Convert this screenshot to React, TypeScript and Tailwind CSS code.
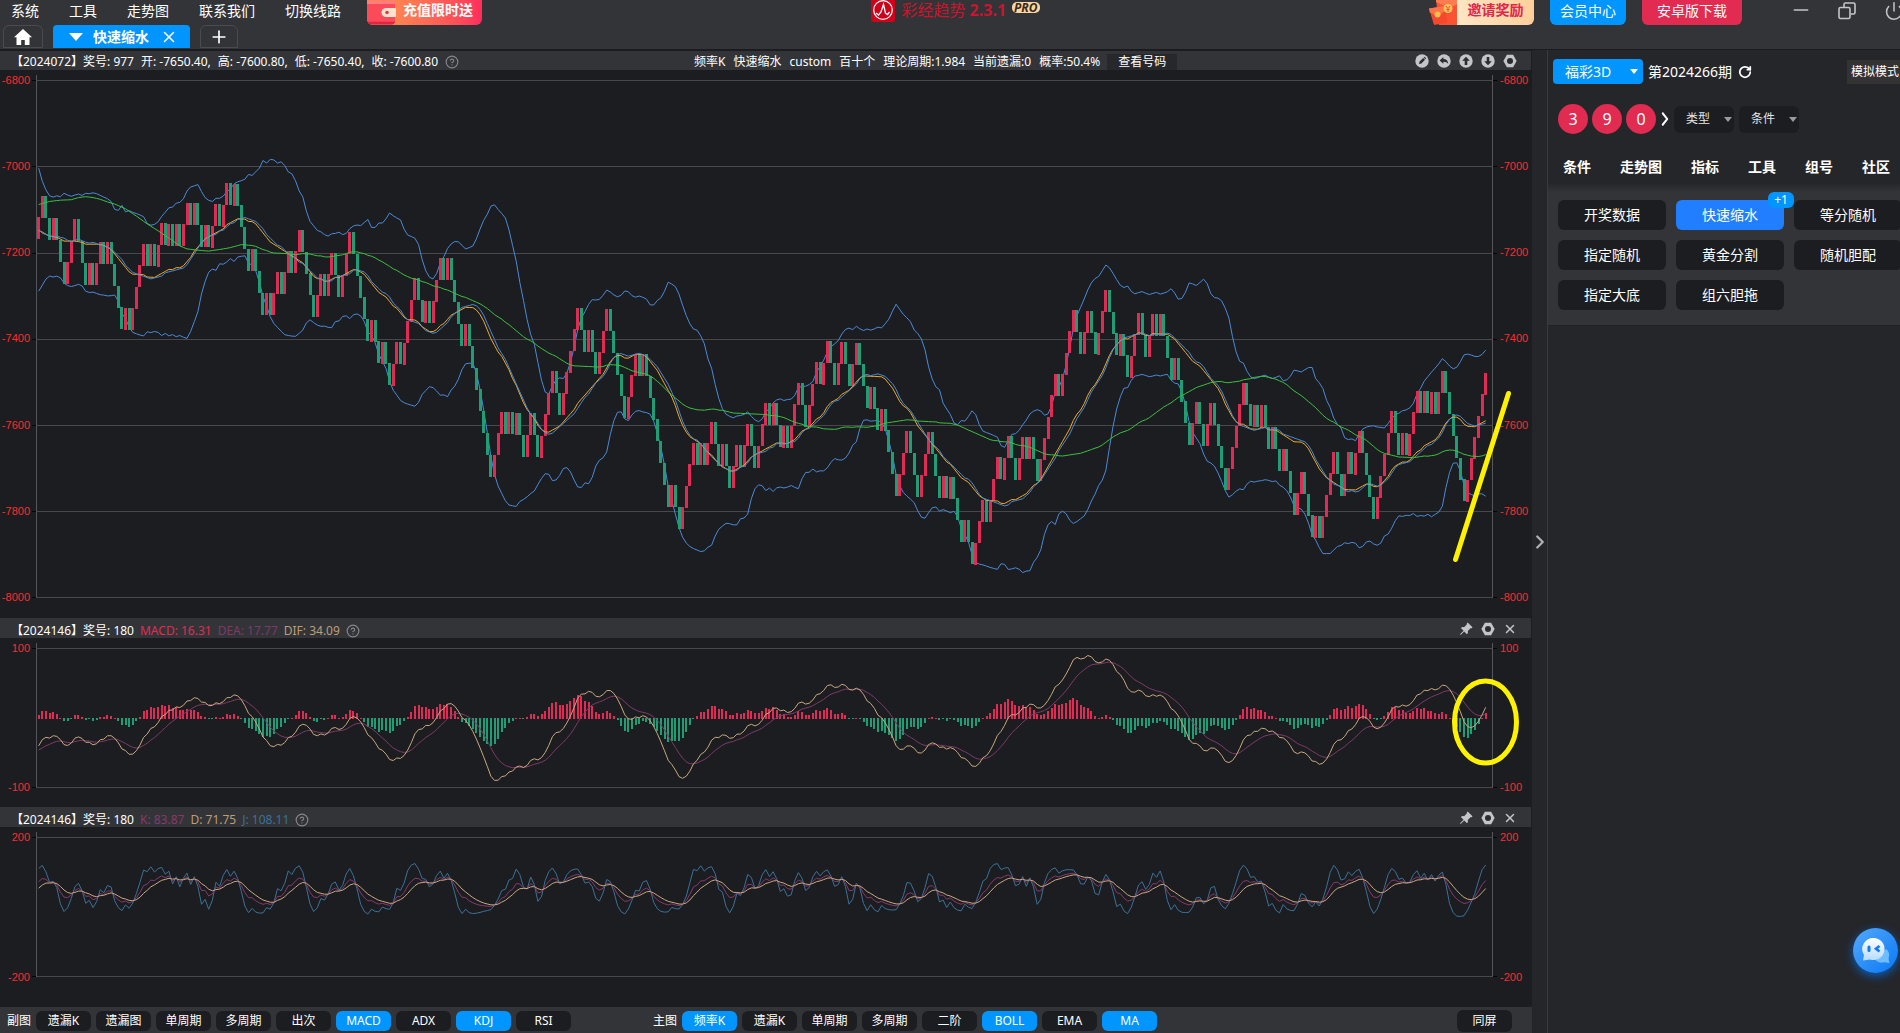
import { ReactNode } from 'react';
import { ChevronRight, CircleHelp, Minus, Plus, Power, RotateCw, X } from 'lucide-react';
import { BsPinAngleFill } from 'react-icons/bs';

/* ---------- market data ---------- */

// U = hit (+49.6), D = miss (-50.4)
const DRAWS = [
  'UUDDUDDDUU', 'UDDDUDUUDU', 'DDDDUDUUUU', 'DUDUUDUDUD', 'UUDUDDUDUU',
  'DUUDUDDDDU', 'DDDUDUUDUU', 'DUUDDDDUUD', 'UUDDUUUDDD', 'DDUDDUDDUU',
  'DUUUUDDUDU', 'UUDUDDDDUD', 'DDDDDDUUUD', 'UDUDDUUDDU', 'UUUDDUUUUU',
  'DDUDDUUUDD', 'DDDUUUDUDD', 'DDDDDUDDUU', 'UUDUDUUDDU', 'DDUUDUUDDU',
  'UUDUDDUDUU', 'UDDUUUDUUD', 'DUUDDUUDDD', 'UDDUDDDDUU', 'UDDDUUUDDD',
  'UDUDDDUDDU', 'UUDUUUDUUD', 'DUUDUDDUUU', 'UUDUUUUDDU', 'UDDUUUDDDU',
  'DDUUUDDUUD', 'UDDDUDDDDU', 'UDDUUDDDDU', 'UUUUDDUDUD', 'DUDDUDDDUU',
  'DDDUDUUUUD', 'DUUDUUDDDD', 'UUUUUDDUDU', 'UUDUDUDUUD', 'DDDDDUUUUU',
  'U',
].join('');

type Candle = { open: number; close: number; up: boolean };

const candles: Candle[] = [];
let last = -7167.5;
for (const d of DRAWS) {
  const up = d === 'U';
  const close = last + (up ? 49.6 : -50.4);
  candles.push({ open: last, close, up });
  last = close;
}
const closes = candles.map((c) => c.close);

// Values of the indicators while their window still reaches before the first candle
const WARM_UPPER = [7004, 7034, 7054, 7068, 7071, 7068, 7070, 7062, 7066, 7069, 7066, 7064, 7067, 7062, 7063, 7061, 7063, 7067, 7071];
const WARM_LOWER = [7289, 7275, 7261, 7254, 7256, 7254, 7258, 7270, 7276, 7278, 7276, 7273, 7277, 7289, 7292, 7291, 7294, 7297, 7298];
const WARM_MA20 = [7148, 7152, 7157, 7161, 7162, 7164, 7168, 7173, 7173, 7173, 7173, 7174, 7176, 7180, 7180, 7180, 7180, 7181, 7183];
const WARM_MA60: [number, number][] = [
  [0, 7088], [3, 7081], [6, 7078], [9, 7077], [11, 7072], [13, 7070], [15, 7072], [17, 7076], [19, 7082],
  [21, 7087], [24, 7098], [27, 7115], [30, 7133], [33, 7149], [36, 7166], [39, 7184], [41, 7191], [44, 7194],
  [47, 7196], [51, 7191], [53, 7188], [56, 7181], [59, 7183],
];

const mean = (v: number[]) => v.reduce((a, b) => a + b, 0) / v.length;

const knot = (pts: [number, number][], i: number) => {
  const n = pts.findIndex((p) => p[0] >= i);
  if (n <= 0) return pts[0][1];
  const [x0, y0] = pts[n - 1];
  const [x1, y1] = pts[n];
  return y0 + ((y1 - y0) * (i - x0)) / (x1 - x0);
};

const ma20 = closes.map((_, i) => (i < 19 ? -WARM_MA20[i] : mean(closes.slice(i - 19, i + 1))));
const ma60 = closes.map((_, i) => (i < 60 ? -knot(WARM_MA60, i) : mean(closes.slice(i - 59, i + 1))));

// Middle band is the N-1 average, the deviation is taken over the full N
const boll = closes.map((_, i) => {
  if (i < 19) {
    const up = -WARM_UPPER[i];
    const low = -WARM_LOWER[i];
    return { up, low, mid: (up + low) / 2 };
  }
  const mid = mean(closes.slice(i - 19, i));
  const w = closes.slice(i - 19, i + 1);
  const sd = Math.sqrt(mean(w.map((c) => (c - ma20[i]) ** 2)));
  return { up: mid + 2 * sd, low: mid - 2 * sd, mid };
});

let fast = -7143;
let slow = -7103;
let signal = -46;
const macd = closes.map((c, i) => {
  if (i > 0) {
    fast += ((c - fast) * 2) / 13;
    slow += ((c - slow) * 2) / 27;
    signal += (fast - slow - signal) / 5;
  }
  return { dif: fast - slow, dea: signal, bar: fast - slow - signal };
});

let kVal = 73;
let dVal = 54;
const kdj = candles.map((c, i) => {
  if (i > 0) {
    const w = candles.slice(Math.max(0, i - 8), i + 1);
    const high = Math.max(...w.map((x) => Math.max(x.open, x.close)));
    const low = Math.min(i < 6 ? -7268 : 0, ...w.map((x) => Math.min(x.open, x.close)));
    kVal = (kVal * 2 + ((c.close - low) / (high - low)) * 100) / 3;
    dVal = (dVal * 2 + kVal) / 3;
  }
  return { k: kVal, d: dVal, j: 3 * kVal - 2 * dVal };
});

/* ---------- charts ---------- */

const PLOT_W = 1466;
const xAt = (i: number) => 6.7 + i * 3.6176;

const toPoints = (values: number[], y: (v: number) => number) =>
  values.map((v, i) => `${xAt(i).toFixed(1)},${y(v).toFixed(1)}`).join(' ');

const Curve = ({ points, color }: { points: string; color: string }) => (
  <polyline points={points} fill="none" stroke={color} strokeWidth="1" vectorEffect="non-scaling-stroke" />
);

const Axes = ({ lines }: { lines: number[] }) => {
  const bottom = Math.max(...lines);
  return (
    <g shapeRendering="crispEdges" strokeWidth="1">
      {lines.map((y) => (
        <g key={y}>
          <path d={`M4.5 ${y}H1460.5`} stroke="#47484b" />
          <path d={`M0 ${y}H4M1461 ${y}H1465`} stroke="#050505" />
        </g>
      ))}
      <path d={`M4.5 5V${bottom}M1460.5 5V${bottom}`} stroke="#55565a" />
    </g>
  );
};

const priceY = (v: number) => 10.2 + (-6800 - v) * 0.4315;
const macdY = (v: number) => 80 - v * 0.696;
const kdjY = (v: number) => 80 - v * 0.3475;

const PricePlot = () => (
  <>
    <Axes lines={[10.5, 96.5, 183.5, 269.5, 355.5, 441.5, 527.5]} />
    <Curve points={toPoints(boll.map((b) => b.up), priceY)} color="#4a8ad8" />
    <Curve points={toPoints(boll.map((b) => b.low), priceY)} color="#4a8ad8" />
    <g shapeRendering="crispEdges">
      {candles.map((c, i) => (
        <rect
          key={i}
          x={Math.round(xAt(i) - 1.5)}
          y={Math.round(priceY(Math.max(c.open, c.close)))}
          width="3"
          height="22"
          fill={c.up ? '#e12b54' : '#1f9d75'}
        />
      ))}
    </g>
    <Curve points={toPoints(ma20, priceY)} color="#f5aa1c" />
    <Curve points={toPoints(boll.map((b) => b.mid), priceY)} color="#4a8ad8" />
    <Curve points={toPoints(ma60, priceY)} color="#3cc040" />
  </>
);

const MacdPlot = () => (
  <>
    <Axes lines={[10.5, 149.5]} />
    <g shapeRendering="crispEdges">
      {macd.map((m, i) => {
        const h = Math.max(1, Math.round(Math.abs(m.bar) * 0.696));
        return (
          <rect
            key={i}
            x={Math.round(xAt(i) - 1)}
            y={m.bar > 0 ? 81 - h : 80}
            width="2"
            height={h}
            fill={m.bar > 0 ? '#e12b54' : '#1f9d75'}
          />
        );
      })}
    </g>
    <Curve points={toPoints(macd.map((m) => m.dea), macdY)} color="#7d3a68" />
    <Curve points={toPoints(macd.map((m) => m.dif), macdY)} color="#c9a87f" />
  </>
);

const KdjPlot = () => (
  <>
    <Axes lines={[10.5, 149.5]} />
    <Curve points={toPoints(kdj.map((v) => v.j), kdjY)} color="#3b7199" />
    <Curve points={toPoints(kdj.map((v) => v.k), kdjY)} color="#853a6c" />
    <Curve points={toPoints(kdj.map((v) => v.d), kdjY)} color="#c9a87f" />
  </>
);

type ChartProps = {
  labels: string[];
  viewHeight: number;
  heightClass: string;
  labelPad: string;
  children: ReactNode;
};

const Chart = ({ labels, viewHeight, heightClass, labelPad, children }: ChartProps) => (
  <div className={`flex font-["Liberation_Sans"] text-[11px] leading-3 text-[#fb2c2f] ${heightClass}`}>
    <div className={`flex w-8 flex-col items-end justify-between pt-1 pr-0.5 ${labelPad}`}>
      {labels.map((l) => (
        <span key={l}>{l}</span>
      ))}
    </div>
    <svg className="h-full w-0 flex-1" viewBox={`0 0 ${PLOT_W} ${viewHeight}`} preserveAspectRatio="none">
      {children}
    </svg>
    <div className={`flex w-[34px] flex-col justify-between pt-1 pl-0.5 ${labelPad}`}>
      {labels.map((l) => (
        <span key={l}>{l}</span>
      ))}
    </div>
  </div>
);

/* ---------- small icons ---------- */

const RoundIcon = ({ children }: { children: ReactNode }) => (
  <svg viewBox="0 0 14 14" className="size-3.5" fill="#c3c5c8">
    <circle cx="7" cy="7" r="6.7" />
    {children}
  </svg>
);

const PencilIcon = () => (
  <RoundIcon>
    <path d="M4 10l.6-2.4 3.6-3.6 1.8 1.8-3.6 3.6zM8.7 3.5l.8-.7 1.7 1.7-.7.8z" fill="#2b2c2f" />
  </RoundIcon>
);

const UndoIcon = () => (
  <RoundIcon>
    <path d="M2.6 6.4L6.4 3v2.1c3 0 4.7 1.9 4.9 5-1-1.7-2.5-2.4-4.9-2.4v2z" fill="#2b2c2f" />
  </RoundIcon>
);

const ArrowIcon = ({ down = false }: { down?: boolean }) => (
  <RoundIcon>
    <path d={down ? 'M7 11.2L3.2 7.2h2.5V3h2.6v4.2h2.5z' : 'M7 2.8l3.8 4H8.3V11H5.7V6.8H3.2z'} fill="#2b2c2f" />
  </RoundIcon>
);

const NutIcon = () => (
  <svg viewBox="0 0 14 14" className="size-3.5">
    <path d="M3.9 .8h6.2L13.6 7l-3.5 6.2H3.9L.4 7z" fill="#c3c5c8" />
    <circle cx="7" cy="7" r="3" fill="#2b2c2f" />
  </svg>
);

const LogoIcon = () => (
  <svg viewBox="0 0 24 22" className="h-[22px] w-6">
    <path d="M0 0h24v19a3 3 0 0 1-3 3H3a3 3 0 0 1-3-3z" fill="#d0021b" />
    <circle cx="12" cy="10" r="9.3" fill="none" stroke="#fff" strokeWidth="1.2" />
    <path d="M5 13l2.5 2 2.5-3 2.5-7.5L14.5 13l2 1.5L18.5 12" fill="none" stroke="#fff" strokeWidth="1.3" />
  </svg>
);

const WalletIcon = () => (
  <svg viewBox="0 0 30 25" className="h-[25px] w-[30px]">
    <path d="M0 1h28v20a3.5 3.5 0 0 1-3.5 3.5h-21A3.5 3.5 0 0 1 0 21z" fill="#fb4a58" />
    <path d="M0 1h28v3H0z" fill="#ff7d80" />
    <path d="M0 20c0 3 2 4.500 4 4.500h20.500c2 0 3.500-1.500 3.500-3.500l-1 .8H3c-1.500 0-3-.8-3-1.800z" fill="#e02540" />
    <path d="M19 8h10v9H19a4.500 4.500 0 0 1 0-9z" fill="#ffe3cf" />
    <circle cx="20" cy="12.5" r="1.8" fill="#e8374a" />
  </svg>
);

const RedPacketIcon = () => (
  <svg viewBox="0 0 32 25" className="h-[25px] w-8">
    <path d="M7 0h24v25H10z" fill="#fb5234" />
    <path d="M7 0h24v3L20 8 7 2z" fill="#ff7c50" />
    <path d="M0 8.500L16 6l2.500 16.500L5 25z" fill="#f7472f" />
    <path d="M0 8.500L16 6l.8 4.500L9.500 16 .8 12.500z" fill="#ff7448" />
    <circle cx="8.5" cy="14.5" r="3" fill="#ffc04a" />
    <circle cx="19" cy="8.5" r="4.5" fill="#ffc356" />
    <path d="M17 6l2 2.500L21 6M19 8.500v3.500M17.300 9.500h3.400" stroke="#f0503a" fill="none" />
  </svg>
);

const ChatIcon = () => (
  <svg viewBox="0 0 45 45" className="size-[45px]">
    <defs>
      <linearGradient id="bubble" x1="0" y1="0" x2="1" y2="1">
        <stop offset="0" stopColor="#52a9fb" />
        <stop offset="1" stopColor="#0a78f5" />
      </linearGradient>
      <linearGradient id="face" x1="0" y1="0" x2="0" y2="1">
        <stop offset="0" stopColor="#fff" />
        <stop offset="1" stopColor="#b5dcff" />
      </linearGradient>
    </defs>
    <circle cx="22.5" cy="22.5" r="22.5" fill="url(#bubble)" />
    <path d="M33 21c3 2 4 6 2.500 9l.8 5-5-.8c-3 1-6.500.3-8.500-2z" fill="#6fbcff" />
    <path d="M20.500 10a11 11 0 1 1-3.500 21.400L10 32.500l1-5.500A11 11 0 0 1 20.500 10z" fill="url(#face)" />
    <rect x="14.5" y="17.5" width="3" height="6.5" rx="1.5" fill="#1478ee" />
    <path d="M26.500 18l-3.500 2.800 3.500 2.700" fill="none" stroke="#1478ee" strokeWidth="2.6" />
  </svg>
);

/* ---------- page parts ---------- */

const MENU = ['系统', '工具', '走势图', '联系我们', '切换线路'];

const Header = () => (
  <header className="border-b border-[#1a1b1e] bg-[#333438]">
    <div className="flex h-[25px] items-start">
      <nav className="flex flex-1 items-start gap-[30px] pl-[11px] text-sm leading-[22px]">
        {MENU.map((m) => (
          <button key={m}>{m}</button>
        ))}
        <button className="-ml-1 flex h-[25px] w-[115px] items-start gap-1.5 overflow-hidden rounded-b-md bg-linear-to-r from-[#ff8350] from-25% to-[#ff2c5c] leading-5 font-bold">
          <WalletIcon />
          充值限时送
        </button>
      </nav>
      <div className="flex items-start gap-1.5">
        <LogoIcon />
        <h1 className="text-base leading-5 text-[#c9152d]">
          彩经趋势 <b>2.3.1</b>
        </h1>
        <span className="mt-0.5 rounded-[5px] bg-[#fbd7a2] px-0.5 text-[12px] leading-[11px] font-bold text-[#3a2a1c] italic">
          PRO
        </span>
      </div>
      <div className="flex flex-1 items-start justify-end text-sm leading-[22px]">
        <button className="mr-4 flex h-[25px] w-[105px] items-start overflow-hidden rounded-b-md leading-5 font-bold text-[#e0264c]">
          <RedPacketIcon />
          <span className="-ml-1 h-full flex-1 bg-linear-to-r from-[#ffe6c4] to-[#ffcf9a]">邀请奖励</span>
        </button>
        <button className="mr-4 h-[25px] w-[76px] rounded-b-md bg-[#0095ff] pb-1">会员中心</button>
        <button className="mr-[50px] h-[25px] w-[100px] rounded-b-md bg-[#e12b50] pb-1">安卓版下载</button>
        <button aria-label="最小化" className="mr-7">
          <Minus className="h-5 w-[18px] scale-x-125 text-[#c3c5c8]" strokeWidth={2} />
        </button>
        <button aria-label="还原" className="mr-7 pt-0.5">
          <svg viewBox="0 0 18 18" className="size-[18px]" fill="none" stroke="#c3c5c8" strokeWidth="1.6">
            <rect x="1" y="5.5" width="11" height="11" rx="1.5" />
            <path d="M6 5V2.500A1.500 1.500 0 0 1 7.500 1h8A1.500 1.500 0 0 1 17 2.500v8a1.500 1.500 0 0 1-1.500 1.500H12.500" />
          </svg>
        </button>
        <button aria-label="退出" className="-mr-1 shrink-0 pt-px">
          <Power className="size-5 text-[#c3c5c8]" strokeWidth={1.8} />
        </button>
      </div>
    </div>
    <div className="flex h-6 items-start pl-[3px]">
      <button aria-label="首页" className="flex h-[23px] w-10 items-center justify-center rounded-t-md border border-[#4a4b4f]">
        <svg viewBox="0 0 18 16" className="h-4 w-[18px]" fill="#fff">
          <path d="M9 0l9 8.3h-2.500V16h-4.700v-5H7.200v5H2.500V8.300H0z" />
        </svg>
      </button>
      <div className="ml-2.5 flex h-[23px] w-[137px] items-center rounded-t-sm bg-[#0095ff] pl-4">
        <span className="border-x-[7px] border-t-[8px] border-x-transparent border-t-white" />
        <span className="ml-2.5 flex-1 text-sm leading-5 font-bold">快速缩水</span>
        <button aria-label="关闭" className="mr-3">
          <X className="size-[18px]" strokeWidth={2} />
        </button>
      </div>
      <button aria-label="新建" className="ml-2.5 flex h-[23px] w-[38px] items-center justify-center rounded-t-md border border-[#4a4b4f]">
        <Plus className="size-5" strokeWidth={2} />
      </button>
    </div>
  </header>
);

const Help = () => <CircleHelp className="size-3.5 text-[#85868a]" strokeWidth={2} />;

const PriceBar = () => (
  <div className="mr-px flex h-[19px] items-end bg-[#333438] pl-[11px] leading-4">
    <div className="flex w-[683px] items-center gap-[7px]">
      {['【2024072】奖号: 977', '开: -7650.40,', '高: -7600.80,', '低: -7650.40,', '收: -7600.80'].map((t) => (
        <span key={t}>{t}</span>
      ))}
      <Help />
    </div>
    <div className="flex items-center gap-2">
      {['频率K', '快速缩水', 'custom', '百十个', '理论周期:1.984', '当前遗漏:0', '概率:50.4%'].map((t) => (
        <span key={t}>{t}</span>
      ))}
    </div>
    <button className="ml-[7px] h-4 w-[70px] bg-[#27282b]">查看号码</button>
    <div className="mr-3.5 ml-auto flex gap-2 pb-0.5">
      <PencilIcon />
      <UndoIcon />
      <ArrowIcon />
      <ArrowIcon down />
      <NutIcon />
    </div>
  </div>
);

const IndicatorBar = ({ items }: { items: [string, string][] }) => (
  <div className="mr-px flex h-5 items-center bg-[#333438] pt-1.5 pl-[11px] leading-4">
    <div className="flex items-center gap-1.5">
      <span>【2024146】奖号: 180</span>
      {items.map(([text, cls]) => (
        <span key={text} className={cls}>
          {text}
        </span>
      ))}
      <Help />
    </div>
    <div className="mr-3.5 mb-1 ml-auto flex items-center gap-2">
      <BsPinAngleFill className="size-3.5 text-[#c3c5c8]" />
      <NutIcon />
      <X className="size-3.5 text-[#c3c5c8]" strokeWidth={2.5} />
    </div>
  </div>
);

const Toggle = ({ label, active }: { label: string; active?: boolean }) => (
  <button className={`h-5 w-[55px] rounded-md leading-5 ${active ? 'bg-[#0095ff]' : 'bg-[#1c1d20]'}`}>{label}</button>
);

const SUB = ['遗漏K', '遗漏图', '单周期', '多周期', '出次', 'MACD', 'ADX', 'KDJ', 'RSI'];
const MAIN = ['频率K', '遗漏K', '单周期', '多周期', '二阶', 'BOLL', 'EMA', 'MA'];

const Toolbar = () => (
  <footer className="flex h-[26px] items-center gap-[5px] bg-[#333438] pt-0.5 pl-[7px]">
    <span>副图</span>
    {SUB.map((s) => (
      <Toggle key={s} label={s} active={s === 'MACD' || s === 'KDJ'} />
    ))}
    <span className="ml-[77px]">主图</span>
    {MAIN.map((s) => (
      <Toggle key={s} label={s} active={s === '频率K' || s === 'BOLL' || s === 'MA'} />
    ))}
    <button className="mr-5 ml-auto h-[22px] w-[55px] rounded-md bg-[#1c1d20]">同屏</button>
  </footer>
);

const ACTIONS = ['开奖数据', '快速缩水', '等分随机', '指定随机', '黄金分割', '随机胆配', '指定大底', '组六胆拖'];

const FilterSelect = ({ label }: { label: string }) => (
  <span className="relative flex">
    <select
      aria-label={label}
      className="h-[27px] w-[60px] appearance-none rounded-md bg-[#1c1d20] pl-3 text-[12px] text-[#e4e5e7]"
    >
      <option>{label}</option>
    </select>
    <span className="pointer-events-none absolute top-[11px] right-0.5 border-x-4 border-t-[5px] border-x-transparent border-t-[#9a9b9e]" />
  </span>
);

const SidePanel = () => (
  <aside className="w-[353px] shrink-0 overflow-hidden border-l border-[#3a3b3f] bg-[#25262a]">
    <div className="flex items-center pt-[9px] pl-[5px] text-sm">
      <span className="relative flex">
        <select aria-label="彩种" className="h-[25px] w-[90px] appearance-none rounded-sm bg-[#0095ff] pl-3">
          <option>福彩3D</option>
        </select>
        <span className="pointer-events-none absolute top-[10px] right-[5px] border-x-4 border-t-[5px] border-x-transparent border-t-white" />
      </span>
      <span className="ml-[5px]">第2024266期</span>
      <button aria-label="刷新" className="ml-1.5">
        <RotateCw className="size-3.5" strokeWidth={3} />
      </button>
      <button className="ml-auto h-6 w-[53px] shrink-0 bg-[#333333] pl-1 text-left text-[12px] whitespace-nowrap">
        模拟模式
      </button>
    </div>

    <div className="mt-5 flex items-center pl-2.5">
      <div className="flex gap-1">
        {['3', '9', '0'].map((n) => (
          <span key={n} className="flex size-[30px] items-center justify-center rounded-full bg-[#e12b50] text-base">
            {n}
          </span>
        ))}
      </div>
      <ChevronRight className="size-[18px] scale-y-125" strokeWidth={2.5} />
      <div className="flex gap-[5px]">
        <FilterSelect label="类型" />
        <FilterSelect label="条件" />
      </div>
    </div>

    <nav className="mt-[18px] mb-0.5 flex h-[30px] items-center gap-[29px] pl-[15px] text-sm font-bold whitespace-nowrap">
      {['条件', '走势图', '指标', '工具', '组号', '社区'].map((t) => (
        <button key={t} className="shrink-0">
          {t}
        </button>
      ))}
    </nav>

    <div className="h-[142px] border-b border-[#1f2023] bg-linear-to-b from-[#27282c] to-[#333438] to-[8px] pt-4 pl-2.5">
      <div className="grid w-[344px] grid-cols-3 gap-2.5 text-sm">
        {ACTIONS.map((a, i) => (
          <button
            key={a}
            className={`relative h-[30px] rounded-md leading-[30px] ${i === 1 ? 'bg-[#217fff]' : 'bg-[#1c1d20]'}`}
          >
            {a}
            {i === 1 && (
              <span className="absolute -top-2 -right-2.5 h-4 w-[26px] rounded-md bg-[#0095ff] text-[12px] leading-4">
                +1
              </span>
            )}
          </button>
        ))}
      </div>
    </div>
  </aside>
);

export default function App() {
  return (
    <div className='relative flex min-h-screen flex-col overflow-hidden bg-[#25262a] font-["Noto_Sans","Noto_Sans_CJK_SC",sans-serif] text-[12px] text-white'>
      <Header />
      <div className="flex flex-1">
        <main className="flex min-w-0 flex-1 flex-col">
          <div className="relative flex flex-1 flex-col bg-[#1c1d20] pt-px">
            <PriceBar />
            <Chart
              labels={['-6800', '-7000', '-7200', '-7400', '-7600', '-7800', '-8000']}
              viewHeight={548}
              heightClass="h-[548px]"
              labelPad="pb-[15px]"
            >
              <PricePlot />
            </Chart>
            <IndicatorBar
              items={[
                ['MACD: 16.31', 'text-[#e12b54]'],
                ['DEA: 17.77', 'text-[#7d3a68]'],
                ['DIF: 34.09', 'text-[#bd9d78]'],
              ]}
            />
            <Chart labels={['100', '-100']} viewHeight={169} heightClass="h-[169px]" labelPad="pb-[14px]">
              <MacdPlot />
            </Chart>
            <IndicatorBar
              items={[
                ['K: 83.87', 'text-[#853a6c]'],
                ['D: 71.75', 'text-[#bd9d78]'],
                ['J: 108.11', 'text-[#3b7199]'],
              ]}
            />
            <Chart labels={['200', '-200']} viewHeight={180} heightClass="h-[180px]" labelPad="pb-6">
              <KdjPlot />
            </Chart>
            {/* hand-drawn marks over the charts */}
            <svg
              className="pointer-events-none absolute inset-0 size-full"
              viewBox="0 0 1532 957"
              preserveAspectRatio="none"
              fill="none"
              stroke="#fff200"
              strokeWidth="5"
              strokeLinecap="round"
            >
              <path d="M1455.5 509.5L1508.5 343.5" />
              <ellipse cx="1485.5" cy="672" rx="31" ry="41" />
            </svg>
          </div>
          <Toolbar />
        </main>
        <button aria-label="收起" className="flex w-[15px] shrink-0 items-center justify-center text-[#b0b1b4]">
          <ChevronRight className="size-[22px] shrink-0" strokeWidth={2.5} />
        </button>
        <SidePanel />
      </div>
      <button aria-label="客服" className="absolute right-[2px] bottom-[60px] rounded-full shadow-[0_3px_10px_#0a5fc0]">
        <ChatIcon />
      </button>
    </div>
  );
}
